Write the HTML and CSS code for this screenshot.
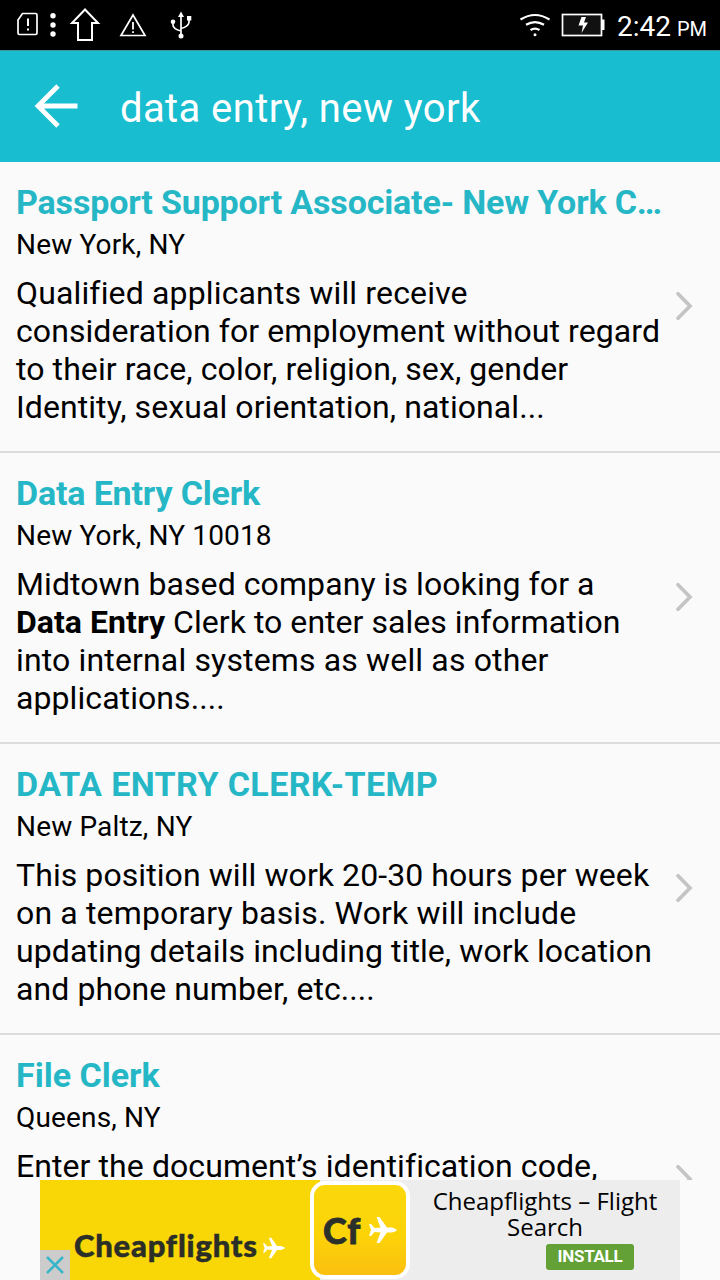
FILE: index.html
```html
<!DOCTYPE html>
<html lang="en">
<head>
<meta charset="utf-8">
<title>data entry, new york</title>
<link rel="stylesheet" href="styles.css">
</head>
<body>
<div class="screen">
  <header class="status">
    <svg class="status-left" width="240" height="50" viewBox="0 0 240 50" fill="none" stroke="#fff" stroke-width="1.7">
      <path d="M22.500 13.500H35.500Q37 13.500 37 15V33Q37 34.500 35.500 34.500H19.500Q18 34.500 18 33V20Z"/>
      <path stroke-width="2" d="M28 18.500V26M28 28.500V30.500"/>
      <g fill="#fff" stroke="none"><circle cx="53" cy="15.700" r="2.700"/><circle cx="53" cy="25" r="2.700"/><circle cx="53" cy="34" r="2.700"/></g>
      <path stroke-width="2" d="M85 9.500L98 23H92V40H78V23H72Z"/>
      <path stroke-width="1.700" d="M133 15L145 35.500H121Z"/><path stroke-width="1.800" d="M133 22V29.500M133 31.300V33"/>
      <path d="M181 15V36M173 22V25Q173 29 181 31M189 19V22Q189 26.500 181 28.500"/>
      <g fill="#fff" stroke="none"><path d="M181 11.500L184 17H178ZM187 16H191.300V20.500H187Z"/><circle cx="173" cy="21.800" r="2.300"/><circle cx="181" cy="36" r="2.500"/></g>
    </svg>
    <div class="status-right">
      <svg width="110" height="50" viewBox="500 0 110 50" fill="none" stroke="#fff">
        <path stroke-width="2.200" d="M520.500 19.500Q535 10.500 549.500 19.500M526 24.800Q535 19.300 544 24.800M530.500 30Q535 27.200 539.500 30"/>
        <circle cx="535" cy="34.800" r="1.500" fill="#fff" stroke="none"/>
        <rect x="562.500" y="14.500" width="39" height="21" fill="#111" stroke-width="1.700"/>
        <path d="M602 19.500H604.500V30H602Z" fill="#fff" stroke="none"/>
        <path d="M581.500 17H586L584 22.500H588L581.500 33L583 25.500H578.500Z" fill="#fff" stroke="none"/>
      </svg>
      <span class="time">2:42</span><span class="meridiem">PM</span>
    </div>
  </header>
  <nav class="toolbar">
    <svg class="back" width="44" height="44" viewBox="0 0 44 44" fill="none" stroke="#fff" stroke-width="4.800"><path d="M24 2L4 22L24 42M3.500 22H43.500"/></svg>
    <h1 class="query">data entry, new york</h1>
  </nav>
  <main class="jobs">
    <article class="job">
      <div class="job-text">
        <h2 class="title tight">Passport Support Associate- New York C…</h2>
        <p class="place">New York, NY</p>
        <p class="summary"><span class="open">Qualified applicants will receive</span><br>consideration for employment without regard<br>to their race, color, religion, sex, gender<br>Identity, sexual orientation, national...</p>
      </div>
      <svg class="chevron" width="20" height="32" viewBox="0 0 20 32"><path d="M3 3.800L15 16L3 28.200"/></svg>
    </article>
    <article class="job">
      <div class="job-text">
        <h2 class="title tight">Data Entry Clerk</h2>
        <p class="place">New York, NY 10018</p>
        <p class="summary">Midtown based company is looking for a<br><span class="close-set"><b>Data Entry</b> Clerk to enter sales information</span><br><span class="open">into internal systems as well as other</span><br>applications....</p>
      </div>
      <svg class="chevron" width="20" height="32" viewBox="0 0 20 32"><path d="M3 3.800L15 16L3 28.200"/></svg>
    </article>
    <article class="job">
      <div class="job-text">
        <h2 class="title caps">DATA ENTRY CLERK-TEMP</h2>
        <p class="place">New Paltz, NY</p>
        <p class="summary">This position will work 20-30 hours per week<br><span class="open">on a temporary basis. Work will include</span><br>updating details including title, work location<br>and phone number, etc....</p>
      </div>
      <svg class="chevron" width="20" height="32" viewBox="0 0 20 32"><path d="M3 3.800L15 16L3 28.200"/></svg>
    </article>
    <article class="job last">
      <div class="job-text">
        <h2 class="title">File Clerk</h2>
        <p class="place">Queens, NY</p>
        <p class="summary">Enter the document’s identification code,</p>
      </div>
      <svg class="chevron" width="20" height="32" viewBox="0 0 20 32"><path d="M3 3.800L15 16L3 28.200"/></svg>
    </article>
  </main>
  <footer class="ad">
    <div class="brand">
      <span class="brand-name">Cheapflights</span>
      <svg class="brand-plane" width="24" height="22" viewBox="0 0 30 28"><use href="#plane"/></svg>
      <span class="close"><svg width="20" height="20" viewBox="0 0 20 20"><path d="M2 2L18 18M18 2L2 18"/></svg></span>
    </div>
    <div class="app-icon">
      <span class="app-name">Cf</span>
      <svg class="app-plane" width="30" height="28" viewBox="0 0 30 28"><path id="plane" fill="#fff" d="M1 8H3L6.500 12L12.500 11.500L8.500 1H11.500L19 11.500H24Q28 12.500 29 14Q28 15.500 24 16.500H19L11.500 27H8.500L12.500 16.500L6.500 16L3 20H1L3 14Z"/></svg>
    </div>
    <div class="offer">
      <p class="offer-name">Cheapflights – Flight<br>Search</p>
      <span class="install">INSTALL</span>
    </div>
  </footer>
</div>
</body>
</html>
```

FILE: styles.css
```css
* { box-sizing: border-box; }
body, h1, h2, p { margin: 0; }
body { background: #fafafa; color: #000; font-family: Roboto, sans-serif; }
.screen { width: 720px; height: 1280px; display: flex; flex-direction: column; overflow: hidden; }
svg { display: block; flex: none; }

.status { height: 50px; flex: none; background: #000; color: #fff; display: flex; justify-content: space-between; }
.status-right { display: flex; width: 220px; align-items: baseline; white-space: nowrap; }
.status-right svg { align-self: flex-start; }
.time { font-size: 28px; line-height: 54px; margin-left: 7px; }
.meridiem { font-size: 20px; margin-left: 6px; }

.toolbar { height: 112px; flex: none; background: #18bdd0; color: #fff; display: flex; align-items: center; padding-left: 34px; box-shadow: inset 0 1px #3c9498; }
.query { font-size: 40px; font-weight: 400; line-height: 48px; letter-spacing: .4px; margin: 5px 0 0 42px; white-space: nowrap; }

.jobs { height: 1018px; flex: none; overflow: hidden; }
.job { height: 291px; display: flex; padding: 20px 16px 0; border-bottom: 2px solid #dcdcdc; }
.job-text { width: 659px; white-space: nowrap; }
.title { font-size: 34px; line-height: 40px; font-weight: 700; color: #25b7c6; }
.title.tight { letter-spacing: -.16px; }
.title.caps { letter-spacing: .4px; }
.place { font-size: 28px; line-height: 33px; letter-spacing: .16px; margin-top: 6px; }
.summary { font-size: 32px; line-height: 38px; letter-spacing: .08px; margin-top: 13px; }
.close-set { letter-spacing: .04px; }
.open { letter-spacing: .15px; }
.chevron { margin-top: 108px; fill: none; stroke: #c4c4c4; stroke-width: 3.7; stroke-linecap: round; }

.ad { height: 100px; width: 640px; margin-left: 40px; display: flex; background: linear-gradient(90deg, #f9d606 280px, #ededed 280px); position: relative; }
.brand { width: 270px; display: flex; padding: 48px 0 0 34px; white-space: nowrap; }
.brand-name { width: 184px; font-family: Lato, sans-serif; font-weight: 900; font-size: 31px; line-height: 34px; letter-spacing: .8px; -webkit-text-stroke: .5px #2b2e27; color: #2b2e27; }
.brand-plane { margin: 9px 0 0 4px; }
.close { position: absolute; left: 0; bottom: 0; width: 30px; height: 30px; background: #ccc; padding: 5px; }
.close path { stroke: #36b5c9; stroke-width: 2.5; fill: none; }
.app-icon { width: 100px; height: 98px; margin-top: 1px; border: 4px solid #fff; border-radius: 15px; background: linear-gradient(#fbd80b, #fbd408 55%, #fbbf10); display: flex; align-items: center; padding-left: 9px; }
.app-name { font-family: Lato, sans-serif; font-weight: 900; font-size: 36px; line-height: 40px; letter-spacing: 1px; -webkit-text-stroke: .8px #2b302b; color: #2b302b; width: 45px; }
.offer { width: 270px; padding-top: 8px; }
.offer-name { font-family: "Open Sans", sans-serif; font-size: 24px; line-height: 26px; text-align: center; }
.install { display: block; width: 88px; height: 26px; margin: 4px 0 0 136px; border-radius: 3px; background: #63a136; color: #fff; font-size: 17px; line-height: 25px; letter-spacing: -.3px; font-weight: 700; text-align: center; }
```
